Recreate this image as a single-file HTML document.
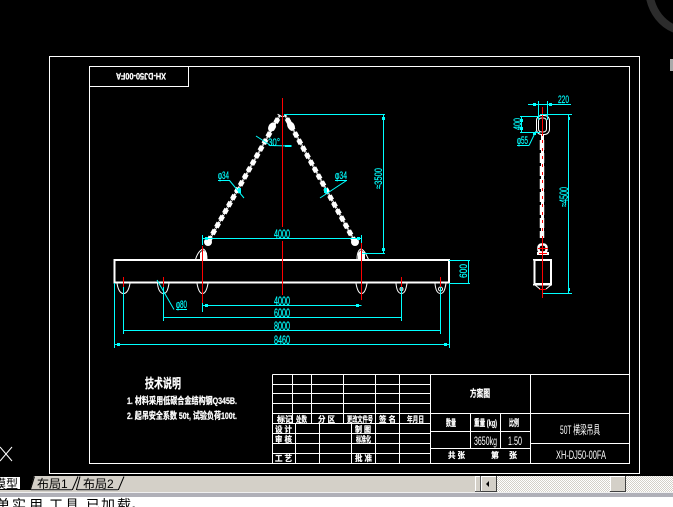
<!DOCTYPE html>
<html>
<head>
<meta charset="utf-8">
<title>CAD</title>
<style>
html,body{margin:0;padding:0;background:#000;width:673px;height:507px;overflow:hidden}
svg{display:block;position:absolute;left:0;top:0}
text{font-family:"Liberation Sans","Noto Sans CJK SC",sans-serif}
.w{fill:#fff}.c{fill:#0ff;stroke:#0ff;stroke-width:.2}
.b{font-weight:bold;stroke:#fff;stroke-width:.25}
</style>
</head>
<body>
<svg width="673" height="507" viewBox="0 0 673 507" xmlns="http://www.w3.org/2000/svg">
<defs>
<pattern id="dz" width="2" height="2" patternUnits="userSpaceOnUse">
<rect width="2" height="2" fill="#fff"/><rect width="1" height="1" fill="#d4d0c8"/><rect x="1" y="1" width="1" height="1" fill="#d4d0c8"/>
</pattern>
</defs>
<rect width="673" height="507" fill="#000"/>

<!-- corner decoration -->
<path d="M650 -2 C653 12 662 24 675 29" fill="none" stroke="#2c2c2c" stroke-width="8"/>
<rect x="670" y="59" width="3" height="12" fill="#a9a9a9"/>

<!-- frames -->
<g fill="none" stroke="#fff" stroke-width="1" shape-rendering="crispEdges">
<rect x="49.5" y="56.5" width="590" height="417"/>
<rect x="89.5" y="66.5" width="540" height="397"/>
<rect x="89.5" y="66.5" width="99" height="20"/>
<path d="M272.5 374.5H430.5M272.5 384.5H430.5M272.5 393.5H430.5M272.5 403.5H430.5M272.5 413.5H430.5M272.5 423.5H430.5M272.5 433.5H430.5M272.5 443.5H430.5M272.5 453.5H430.5"/>
<path d="M272.5 374.5V463.5M292.5 374.5V423.5M311.5 374.5V423.5M343.5 374.5V423.5M375.5 374.5V463.5M399.5 374.5V463.5M430.5 374.5V463.5"/>
<path d="M295.5 423.5V463.5M319.5 423.5V463.5M351.5 423.5V463.5"/>
<path d="M430.5 374.5H629.5M430.5 413.5H629.5M430.5 431.5H530.5M430.5 448.5H530.5M530.5 443.5H629.5"/>
<path d="M530.5 374.5V463.5M470.5 413.5V448.5M500.5 413.5V448.5"/>
</g>

<!-- title box text, rotated -->
<text transform="rotate(180 141 76.5)" x="116" y="80" font-size="9" class="w b" textLength="50" lengthAdjust="spacingAndGlyphs">XH-DJ50-00FA</text>

<!-- beam -->
<g fill="none" stroke="#fff" shape-rendering="crispEdges">
<rect x="114.5" y="260" width="334.5" height="22.5" stroke-width="2"/>
</g>

<!-- chains -->
<g fill="none" stroke-linecap="butt">
<path d="M280 115L208 242" stroke="#fff" stroke-width="2"/>
<path d="M280 115L208 242" stroke="#fff" stroke-width="5" stroke-dasharray="5 3" stroke-dashoffset="-4"/>
<path d="M280 115L208 242" stroke="#000" stroke-width="1" stroke-dasharray="1 7" stroke-dashoffset="-2"/>
<path d="M285 115L355 242" stroke="#fff" stroke-width="2"/>
<path d="M285 115L355 242" stroke="#fff" stroke-width="5" stroke-dasharray="5 3" stroke-dashoffset="-4"/>
<path d="M285 115L355 242" stroke="#000" stroke-width="1" stroke-dasharray="1 7" stroke-dashoffset="-2"/>
</g>
<ellipse cx="272" cy="127" rx="3.5" ry="5" transform="rotate(30 272 127)" fill="#fff"/>
<ellipse cx="291" cy="126" rx="3.5" ry="5" transform="rotate(-30 291 126)" fill="#fff"/>
<circle cx="208" cy="242" r="4" fill="#fff"/>
<circle cx="355" cy="242" r="4" fill="#fff"/>

<!-- upper shackles -->
<g fill="none" stroke="#fff" stroke-width="1">
<path d="M195.500 259.500C197 254 200 250 203 249C206 250 207 255 207 259.500"/>
<path d="M368.500 259.500C366 254 364 250 361 249C358 250 357 255 357 259.500"/>
</g>
<path d="M200 259V253L203 250L207 253V259Z" fill="#fff"/>
<path d="M358 259V253L361 250L365 253V259Z" fill="#fff"/>

<!-- hooks -->
<g fill="none" stroke="#fff" stroke-width="1">
<path d="M117 283.500C118 289 120 293.500 123.500 293.500C127 293.500 129 289 130 283.500"/>
<path d="M157.500 283.500C158 289 160 293.500 163.500 293.500C167 293.500 168 289 169 283.500"/>
<path d="M197 283.500C198 289 199.500 293.500 202.500 293.500C205.500 293.500 207 289 208 283.500"/>
<path d="M356 283.500C357 289 358.500 293.500 361.500 293.500C364.500 293.500 366 289 367 283.500"/>
<path d="M396 283.500C396.500 289 398 293.500 401.500 293.500C405 293.500 406 289 407 283.500"/>
<path d="M435 283.500C435.500 289 437 293.500 440.500 293.500C444 293.500 445 289 446 283.500"/>
<circle cx="440.500" cy="289" r="2"/>
<circle cx="401.500" cy="289" r="1.500"/>
</g>

<!-- cyan dims main -->
<g fill="none" stroke="#0ff" stroke-width="1" shape-rendering="crispEdges">
<path d="M203 238.500H361.500M202.500 235V245M361.500 235V245"/>
<path d="M284 114.500H385M383.500 114.500V253M361 253.500H385"/>
<path d="M202.500 305.500H361.500M202.500 283V312"/>
<path d="M163.500 283V321M401.500 283V321M163.500 317.500H401.500"/>
<path d="M123.500 283V334M440.500 283V334M123.500 330.500H440.500"/>
<path d="M114.500 283V348M449.500 283V348M114.500 344.500H449.500"/>
<path d="M449 260.500H470M449 283.500H470M468.500 260V284"/>
<path d="M218 180.500H230M335 180.500H347M176 309.500H187"/>
</g>
<g fill="none" stroke="#0ff" stroke-width="1">
<path d="M229.500 180.500L244 198M346.500 180.500L320 198"/>
<path d="M157 280L174 309.500"/>
<path d="M256 136L270 145M270 145.500L292 146"/>
</g>
<g fill="#0ff" shape-rendering="crispEdges">
<rect x="205" y="237" width="3" height="3"/><rect x="357" y="237" width="3" height="3"/>
<rect x="382" y="117" width="3" height="3"/><rect x="382" y="248" width="3" height="3"/>
<rect x="205" y="304" width="3" height="3"/><rect x="356" y="304" width="3" height="3"/>
<rect x="165" y="317" width="3" height="1"/><rect x="396" y="317" width="3" height="1"/>
<rect x="126" y="330" width="3" height="1"/><rect x="436" y="330" width="3" height="1"/>
<rect x="117" y="343" width="3" height="3"/><rect x="444" y="343" width="3" height="3"/>
<rect x="285" y="145" width="6" height="2"/>
<rect x="238" y="188" width="3" height="5"/><rect x="324" y="188" width="3" height="5"/>
</g>
<g class="c" font-size="12">
<text x="274" y="238" textLength="16" lengthAdjust="spacingAndGlyphs">4000</text>
<text x="274" y="305" textLength="16" lengthAdjust="spacingAndGlyphs">4000</text>
<text x="274" y="317" textLength="16" lengthAdjust="spacingAndGlyphs">6000</text>
<text x="274" y="330" textLength="16" lengthAdjust="spacingAndGlyphs">8000</text>
<text x="274" y="344" textLength="16" lengthAdjust="spacingAndGlyphs">8460</text>
<text x="218" y="179" font-size="11" textLength="11" lengthAdjust="spacingAndGlyphs">φ34</text>
<text x="335" y="179" font-size="11" textLength="12" lengthAdjust="spacingAndGlyphs">φ34</text>
<text x="176" y="308" font-size="11" textLength="11" lengthAdjust="spacingAndGlyphs">φ80</text>
<text x="268" y="146" font-size="11" textLength="12" lengthAdjust="spacingAndGlyphs">30°</text>
<text transform="translate(382 189) rotate(-90)" font-size="11" textLength="21" lengthAdjust="spacingAndGlyphs">≈3500</text>
<text transform="translate(467 278) rotate(-90)" font-size="11" textLength="14" lengthAdjust="spacingAndGlyphs">600</text>
</g>

<!-- red centre lines -->
<g stroke="#f00" stroke-width="1" fill="none" shape-rendering="crispEdges">
<path d="M282.500 98V227M282.500 241V295" stroke-width="1.200"/>
<path d="M202.500 246V303M361.500 243V300"/>
<path d="M123.500 277V287M163.500 277V287M401.500 277V287M440.500 277V287"/>
</g>

<!-- side view -->
<g fill="none" stroke="#fff">
<rect x="536.500" y="115.500" width="13" height="19" rx="5" stroke-width="1"/>
<rect x="538.500" y="118" width="8" height="14" rx="3" stroke-width="1"/>
<path d="M542.500 134V238" stroke-width="3"/>
<path d="M542 140V238" stroke-width="4.500" stroke-dasharray="10 3"/>
<rect x="538.500" y="244.500" width="8" height="8" rx="3" stroke-width="2.500"/>
<path d="M537 253.500H549" stroke-width="3"/>
<rect x="534.500" y="260" width="16.500" height="24" stroke-width="2" shape-rendering="crispEdges"/>
<path d="M533 259.500H552M533 284.500H552" stroke-width="1.500" shape-rendering="crispEdges"/>
<path d="M535 285L540 289M551 285L546 289" stroke-width="1"/>
</g>
<g stroke="#f00" fill="none" shape-rendering="crispEdges">
<path d="M542.500 107V136M542.500 238V298" stroke-width="1"/>
<path d="M542.500 140V238" stroke-dasharray="3 5" stroke-width="1"/>
<path d="M538 248.500H548M539 253.500H547M539 289.500H546"/>
</g>
<g fill="none" stroke="#0ff" stroke-width="1" shape-rendering="crispEdges">
<path d="M528 104.500H571M538.500 101V120M547.500 101V120"/>
<path d="M540 114.500H572M568.500 114.500V293M543 293.500H572"/>
<path d="M520 116.500H540M520 132.500H540M521.500 116V132"/>
<path d="M517 145.500H529"/>
</g>
<path d="M529 145.500L536 131" stroke="#0ff" fill="none"/>
<g fill="#0ff" shape-rendering="crispEdges">
<rect x="533" y="103" width="3" height="3"/><rect x="549" y="103" width="3" height="3"/>
<rect x="568" y="117" width="2" height="3"/><rect x="568" y="288" width="2" height="3"/>
<rect x="520" y="119" width="3" height="3"/><rect x="520" y="127" width="3" height="3"/>
<rect x="533" y="132" width="3" height="3"/>
</g>
<g class="c">
<text x="558" y="103" font-size="11" textLength="11" lengthAdjust="spacingAndGlyphs">220</text>
<text x="517" y="144" font-size="11" textLength="11" lengthAdjust="spacingAndGlyphs">φ55</text>
<text transform="translate(521 130) rotate(-90)" font-size="11" textLength="12" lengthAdjust="spacingAndGlyphs">400</text>
<text transform="translate(568 207) rotate(-90)" font-size="12" textLength="20" lengthAdjust="spacingAndGlyphs">≈4500</text>
</g>

<!-- technical notes -->
<g class="w b">
<text x="145" y="388" font-size="13" textLength="36" lengthAdjust="spacingAndGlyphs">技术说明</text>
<text x="127" y="404" font-size="9.500" textLength="110" lengthAdjust="spacingAndGlyphs">1. 材料采用低碳合金结构钢Q345B.</text>
<text x="127" y="419" font-size="9.500" textLength="110" lengthAdjust="spacingAndGlyphs">2. 起吊安全系数 50t, 试验负荷100t.</text>
</g>

<!-- left table labels -->
<g class="w b" font-size="8">
<text x="277" y="422">标记</text>
<text x="296" y="422" textLength="11" lengthAdjust="spacingAndGlyphs">处数</text>
<text x="318" y="422" textLength="17" lengthAdjust="spacingAndGlyphs">分 区</text>
<text x="347" y="422" textLength="26" lengthAdjust="spacingAndGlyphs">更改文件号</text>
<text x="379" y="422" textLength="17" lengthAdjust="spacingAndGlyphs">签 名</text>
<text x="407" y="422" textLength="17" lengthAdjust="spacingAndGlyphs">年月日</text>
<text x="275" y="432" textLength="17" lengthAdjust="spacingAndGlyphs">设 计</text>
<text x="275" y="442" textLength="17" lengthAdjust="spacingAndGlyphs">审 核</text>
<text x="275" y="461" textLength="17" lengthAdjust="spacingAndGlyphs">工 艺</text>
<text x="355" y="432" textLength="16" lengthAdjust="spacingAndGlyphs">制 图</text>
<text x="356" y="442" textLength="15" lengthAdjust="spacingAndGlyphs">标准化</text>
<text x="355" y="461" textLength="17" lengthAdjust="spacingAndGlyphs">批 准</text>
</g>

<!-- right table labels -->
<g class="w">
<text x="470" y="397" font-size="10" class="b" textLength="20" lengthAdjust="spacingAndGlyphs">方案图</text>
<text x="446" y="426" font-size="9" class="b" textLength="10" lengthAdjust="spacingAndGlyphs">数量</text>
<text x="474" y="426" font-size="9" class="b" textLength="23" lengthAdjust="spacingAndGlyphs">重量 (kg)</text>
<text x="509" y="426" font-size="9" class="b" textLength="10" lengthAdjust="spacingAndGlyphs">比例</text>
<text x="474" y="445" font-size="12" textLength="23" lengthAdjust="spacingAndGlyphs">3650kg</text>
<text x="508" y="445" font-size="12" textLength="14" lengthAdjust="spacingAndGlyphs">1.50</text>
<text x="448" y="458" font-size="8" class="b" textLength="17" lengthAdjust="spacingAndGlyphs">共 张</text>
<text x="491" y="458" font-size="8" class="b" textLength="26" lengthAdjust="spacingAndGlyphs">第　 张</text>
<text x="560" y="434" font-size="12" textLength="40" lengthAdjust="spacingAndGlyphs">50T 横梁吊具</text>
<text x="556" y="459" font-size="12" textLength="50" lengthAdjust="spacingAndGlyphs">XH-DJ50-00FA</text>
</g>

<!-- UCS X -->
<path d="M0 447L12 461M0 461L12 447" stroke="#fff" fill="none" stroke-width="1"/>

<!-- tab bar -->
<rect x="0" y="476" width="673" height="16" fill="#d4d0c8"/>
<rect x="0" y="492" width="673" height="1" fill="#efefef"/>
<rect x="0" y="493" width="673" height="4" fill="#b0b0b8"/>
<rect x="0" y="497" width="673" height="10" fill="#fff"/>
<path d="M0 476H34L30 490H0Z" fill="#000"/>
<rect x="0" y="477" width="20" height="12" fill="#fff"/>
<text x="-6" y="488" font-size="12" fill="#000">模型</text>
<g fill="#d4d0c8" stroke="#000" stroke-width="1">
<path d="M34.500 476.500L30.500 489.500H72.500L78 476.500"/>
<path d="M80 476.500L76.500 489.500H118.500L124 476.500"/>
</g>
<path d="M31 490H72M77 490H118" stroke="#808080" fill="none"/>
<text x="37" y="488" font-size="12" fill="#000">布局1</text>
<text x="83" y="488" font-size="12" fill="#000">布局2</text>

<!-- scroll -->
<rect x="475" y="476" width="6" height="16" fill="#d4d0c8"/>
<path d="M475.500 492V476.500H480.500M480.500 476V492" fill="none" stroke="#fff" shape-rendering="crispEdges"/>
<path d="M475 491.500H481M480.500 476V492" fill="none" stroke="#555" shape-rendering="crispEdges"/>
<rect x="497" y="476" width="176" height="16" fill="url(#dz)"/>
<g shape-rendering="crispEdges">
<rect x="481" y="476" width="16" height="16" fill="#d4d0c8"/>
<path d="M481.500 491V476.500H496" fill="none" stroke="#fff"/>
<path d="M481 491.500H497M496.500 476V492" fill="none" stroke="#404040"/>
<rect x="610" y="476" width="16" height="16" fill="#d4d0c8"/>
<path d="M610.500 491V476.500H625" fill="none" stroke="#fff"/>
<path d="M610 491.500H626M625.500 476V492" fill="none" stroke="#404040"/>
</g>
<path d="M486 484L489 481V487Z" fill="#000"/>

<!-- command line, clipped at bottom -->
<text x="-4 12 29 49 65 86 101 117 131" y="510" font-size="14" fill="#000">单实用工具已加载。</text>
</svg>
</body>
</html>
